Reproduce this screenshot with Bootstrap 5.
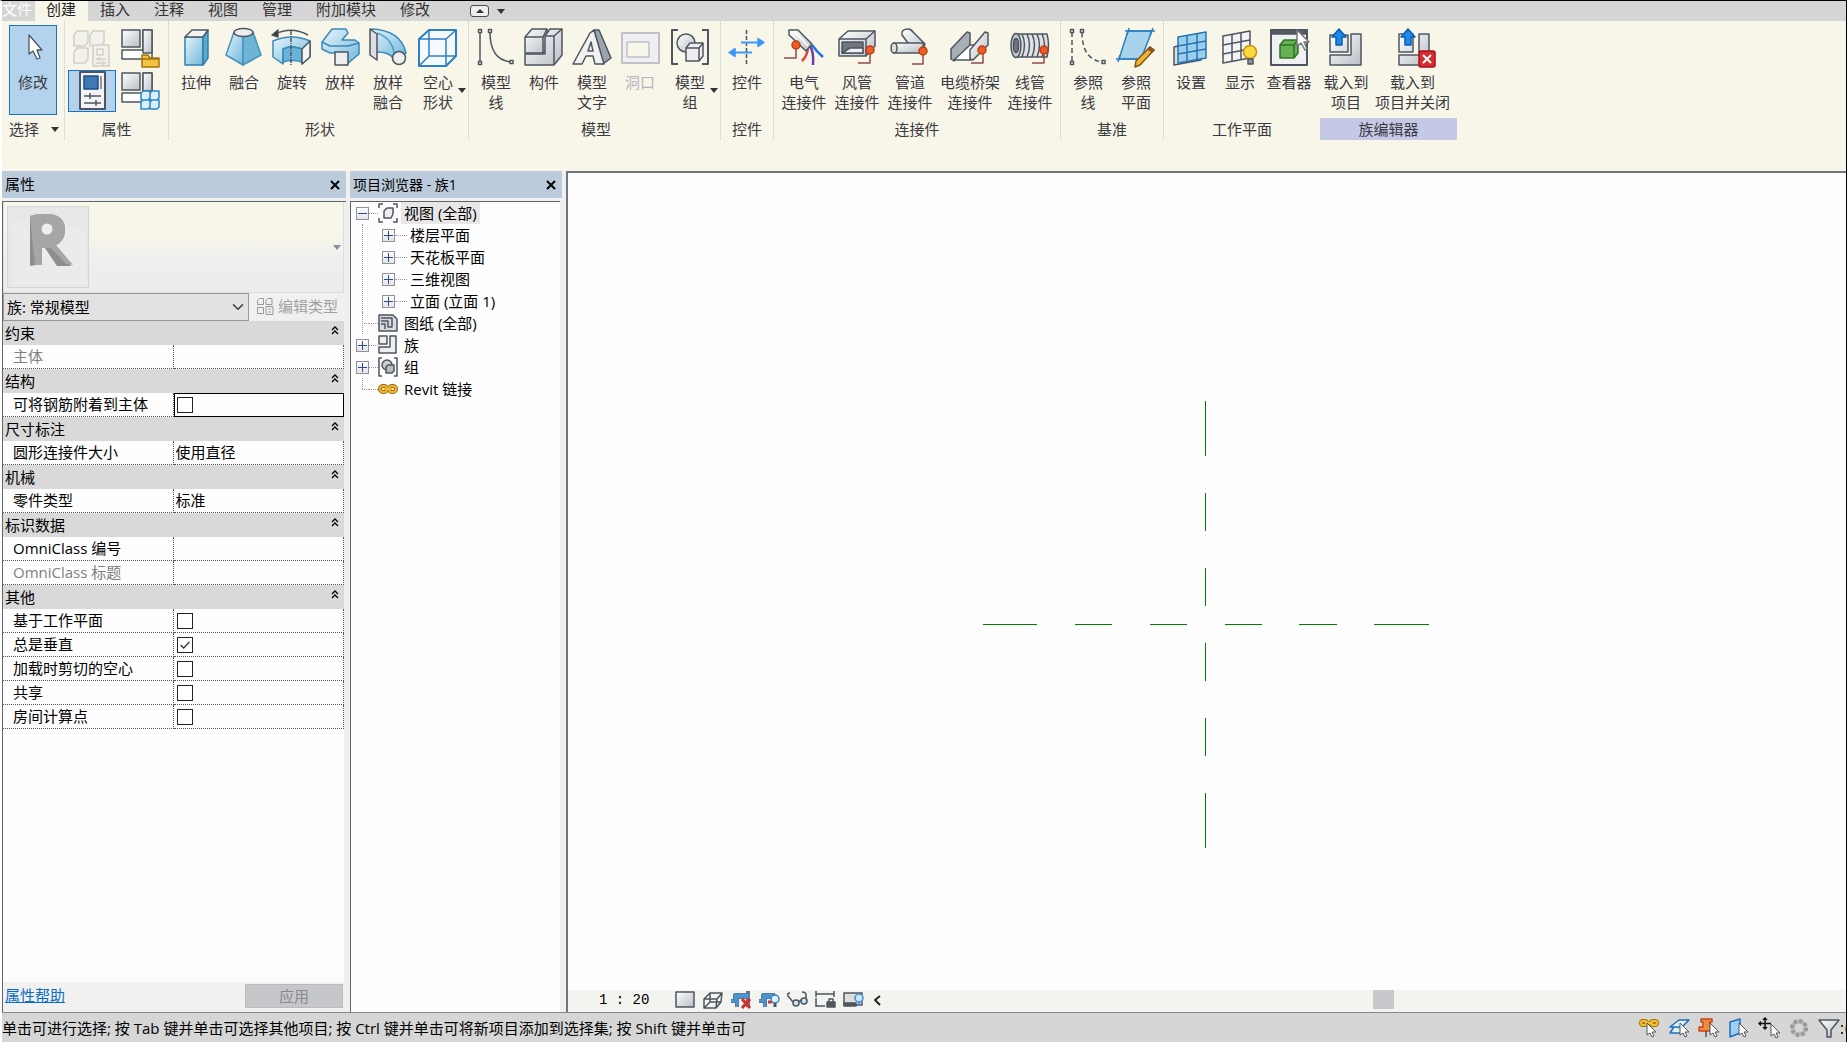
<!DOCTYPE html>
<html lang="zh-CN">
<head>
<meta charset="utf-8">
<meta name="viewport" content="width=device-width, initial-scale=1">
<title>Revit - 族1</title>
<link rel="stylesheet" href="https://cdn.jsdelivr.net/npm/bootstrap@5.3.0/dist/css/bootstrap.min.css">
<style>
body{font-family:"Open Sans","Noto Sans CJK SC",sans-serif;font-size:15px;line-height:20px;color:#000;background:#f0f0f0;border-top:1px solid #000;border-right:1px solid #000;border-left:2px solid #fff}
svg{display:block;flex:none;overflow:visible}
svg.k{fill:none;stroke:#4d5660;stroke-width:1.5;stroke-linejoin:round}
.tabstrip{height:20px;background:#d5d5d6}
.tabstrip .nav-link{padding:0 12px;line-height:16px;height:20px;color:#333;border-radius:0}
.tabstrip .nav-link.filetab{padding:0 3px 0 0;color:#fff}
.tabstrip .nav-link.active{background:#f8f6e8;color:#222;padding-left:11px}
.minibtn{width:19px;height:12px;border:1px solid #444c55;border-radius:3px;background:#eee;padding:0}
.ribbon{height:150px;background:#f8f6e8;color:#3a3a42}
.panel{height:119px;padding:4px 3px 0;border-right:1px dotted #bcc5d0}
.panel .btns{height:90px;gap:1px}
.panel.first{padding-right:5px}
.tight .btns{gap:0}
.flush{padding-right:0}
.ptitle{height:22px;line-height:22px;margin-top:3px;text-align:center}
.famtitle{background:#c6c9e6}
.propgrid{grid-template-columns:48px 48px;grid-template-rows:44px 42px}
.tool{border:0;background:none;padding:2px 0 0;min-width:48px;color:inherit;display:flex;flex-direction:column;align-items:center;text-align:center;line-height:20px;border-radius:0;font-size:15px}
.tool svg{margin-bottom:5px}
.tool.dim{color:#b5b5c2}
.wide .tool{min-width:52px;padding-left:3px;padding-right:3px}
.tool.split{flex-direction:row;align-items:flex-start;min-width:56px;padding-left:6px}
.tool.split .caret{margin-top:61px}
.tool.mod{height:90px;border:1px solid #1b73c4;background:#b3d2ee;padding-top:1px}
.pressed{border:1px solid #1b73c4;background:#b3d2ee}
.caret{width:0;height:0;border:4px solid transparent;border-top:5px solid #333;border-bottom:0}
.dockhead{height:27px;line-height:27px;background:#bccbdb;padding:0 4px 0 3px}
.xbtn{border:0;background:none;padding:0;width:12px}
.props{width:344px}
.browser{width:212px}
.browser .dockhead{font-size:14px}
.well{margin-top:3px;border-top:1px solid #60666c;border-left:1px solid #60666c}
.typesel{height:91px;background:linear-gradient(#f8f6e8 35%,#efefef 60%,#ececee);border:1px solid #ddd;border-top:0;margin-right:2px;padding:4px 2px 4px 3px}
.typesel .caret{border-top-color:#8a90a0}
.thumb{width:82px;height:82px;border:1px solid #d6d6d8;background:#e8e8e8}
.famsel{width:246px;height:28px;border:1px solid #999;border-radius:0;background-color:#e2e2e2;padding:0 28px 0 3px;font-size:15px;line-height:26px;background-size:12px 12px;background-position:right 4px center;color:#000}
.edtype{border:0;background:none;padding:0 0 2px;color:#a0a0a0!important;font-size:15px;height:28px}
.gridwrap{background:#fdfdfd;margin-right:2px}
.grid{border-collapse:separate;border-spacing:0;width:341px;table-layout:fixed}
.grid tr{height:24px}
.grid th,.grid td{padding:0;height:24px;line-height:23px;font-weight:400}
.grid th.grp{background:#d9d9d9;padding:0 6px 0 2px}
.grid th.grp svg{margin-top:4px}
.grid th.nm{width:173px;padding-left:10px;border-bottom:1px dotted #555;border-right:1px dotted #555}
.grid td{border-bottom:1px dotted #555;border-right:1px dotted #555;padding-left:2px}
.grid td.cur{outline:1px solid #000;outline-offset:-1px}
.grid .off{color:#808080}
.grid .form-check-input{display:block;width:16px;height:16px;margin:0 0 0 1px;border:1px solid #222;border-radius:0;background-color:#fff}
.grid .form-check-input:checked{background-image:url("data:image/svg+xml,%3Csvg xmlns='http://www.w3.org/2000/svg' viewBox='0 0 16 16'%3E%3Cpath fill='none' stroke='%23333' stroke-width='1.5' d='M3 8l3.500 3.500L13 4.500'/%3E%3C/svg%3E")}
.propfoot{height:30px;background:#f1f1ef;padding:0 3px 4px 2px}
.propfoot a{color:#0a6cc8}
.applybtn{width:98px;height:24px;border:1px solid #b9bbbf;border-radius:0;background:#c6c7ca;color:#8a8a8a!important;padding:0;line-height:20px;font-size:15px;align-self:flex-end}
.tree{background:#fdfdfd;padding:0 0 0 5px;margin-right:2px}
.tree ul{list-style:none;margin:0;padding:0}
.node{height:22px;line-height:22px;display:flex;align-items:center}
.box{width:13px;height:13px;border:1px solid #8c9299;background:linear-gradient(#fff,#e4e4ea);padding:0;position:relative;flex:none}
.box::before,.box.plus::after{content:"";position:absolute;left:1px;top:5px;width:9px;height:1px;background:#2b4a92}
.box.plus::after{left:5px;top:1px;width:1px;height:9px}
.dots{width:9px;border-top:1px dotted #999;flex:none}
.dots.long{width:12px}
.noexp{width:13px;height:22px;flex:none;position:relative}
.noexp::before{content:"";position:absolute;left:6px;top:0;height:22px;border-left:1px dotted #999}
.noexp::after{content:"";position:absolute;left:6px;width:7px;top:11px;border-top:1px dotted #999}
.noexp.endn::before{height:11px}
.tree .sub{margin-left:6px;border-left:1px dotted #999;padding-left:19px}
.lbl{padding:0 3px;margin-left:3px}
.sub .lbl{margin-left:0}
.lbl.sel{background:#e8e6e6}
.work{min-height:0}
.view{border-left:2px solid #70767c;border-top:2px solid #70767c;background:#fdfdfd;min-width:0}
.drawing{min-height:0;flex:1 1 0}
.viewbar{height:22px;background:#f3f3f0;gap:8px;padding:0 0 2px 31px}
.viewbar .scale{font-family:"Liberation Mono","Noto Sans CJK SC",monospace;font-size:14px;width:68px}
.viewbar button,.statusbar button{border:0;background:none;padding:0}
.hthumb{width:21px;height:19px;background:#c8c9cc;margin-left:482px;align-self:flex-start}
.statusbar{height:30px;background:#d6d6d6;border-top:1px solid #85878b;padding-right:7px}
.statusbar .picks{gap:10px}
</style>
<script src="https://cdn.jsdelivr.net/npm/bootstrap@5.3.0/dist/js/bootstrap.bundle.min.js"></script>
</head>
<body class="d-flex flex-column vh-100">
<svg width="0" height="0" class="position-absolute" aria-hidden="true"><defs>
<linearGradient id="b" x1="0" y1="0" x2="1" y2="1"><stop offset="0" stop-color="#e6f5fb"/><stop offset="1" stop-color="#6fb7dc"/></linearGradient>
<linearGradient id="g" x1="0" y1="0" x2="1" y2="1"><stop offset="0" stop-color="#fff"/><stop offset="1" stop-color="#b9bec5"/></linearGradient>
</defs></svg>

<nav class="tabstrip nav flex-nowrap align-items-start">
<a class="nav-link filetab" href="#">文件</a><a class="nav-link active" href="#">创建</a><a class="nav-link" href="#">插入</a><a class="nav-link" href="#">注释</a><a class="nav-link" href="#">视图</a><a class="nav-link" href="#">管理</a><a class="nav-link" href="#">附加模块</a><a class="nav-link" href="#">修改</a>
<div class="d-flex align-items-center gap-2 ms-4 ps-1 pt-1"><button class="minibtn d-flex align-items-center justify-content-center" aria-label="最小化功能区"><svg width="8" height="4"><path d="M0 4L4 0L8 4z" fill="#333"/></svg></button><span class="caret"></span></div>
</nav>

<header class="ribbon d-flex">
<section class="panel first"><div class="btns ps-1"><button class="tool mod"><svg class="k" width="40" height="40"><path d="M16 8V27L20 24L24 32L27 31L24 23H29z" fill="#fff" stroke-width="1.300"/></svg>修改</button></div>
<div class="ptitle d-flex align-items-center ps-1 gap-2">选择<span class="caret ms-1"></span></div></section>

<section class="panel"><div class="btns propgrid d-grid">
<button class="border-0 bg-transparent p-1 opacity-50" disabled aria-label="族类型"><svg width="40" height="40" class="k"><g stroke="#aaa" fill="#eee"><path d="M2 6l3-4h11v11l-3 4H2zM18 6l3-4h11v11l-3 4H18zM2 23l3-4h11v11l-3 4H2z"/><rect x="21" y="16" width="16" height="21"/><path d="M25 20h6v6h-6zM24 30h10M24 34h10M27 28v4M31 32v4"/></g></svg></button>
<button class="border-0 bg-transparent p-1" aria-label="族类别"><svg width="40" height="40" class="k"><rect x="1" y="1" width="18" height="17" fill="url(#g)"/><path d="M22 1h9v29H1V21h21z" fill="#fff"/><path d="M22 1h9v23h-9z" fill="url(#g)"/><path d="M21 26h6l2 3h9v9H21z" fill="#f3c443" stroke="#a3730d"/><path d="M21 30h17" stroke="#a3730d"/></svg></button>
<button class="pressed p-0 d-flex justify-content-center" aria-label="属性"><svg width="40" height="40" class="k"><rect x="8" y="1" width="25" height="37" fill="#f4f4f6" stroke-width="2"/><path d="M12 5h14v13H12z" fill="#3f78b5" stroke="#1d4d86"/><path d="M29 5v13" stroke="#777"/><path d="M12 25h17M12 32h17M18 22v6M24 29v6"/></svg></button>
<button class="border-0 bg-transparent px-1 py-0" aria-label="类型属性"><svg width="40" height="40" class="k"><rect x="1" y="2" width="18" height="17" fill="url(#g)"/><path d="M22 2h9v29H1V22h21z" fill="#fff"/><path d="M22 2h9v18h-9z" fill="url(#g)"/><g fill="#d9effa" stroke="#2b86c5"><path d="M20 22l2-2h7v7l-2 2h-7zM29 22l2-2h7v7l-2 2h-7zM20 31l2-2h7v7l-2 2h-7zM29 31l2-2h7v7l-2 2h-7z"/></g></svg></button></div>
<div class="ptitle">属性</div></section>

<section class="panel tight flush"><div class="btns d-flex">
<button class="tool"><svg width="40" height="40" class="k"><path d="M9 10h18v28H9z" fill="url(#b)" stroke="#2f7fae"/><path d="M27 10l5-7v28l-5 7z" fill="#5ba9cf" stroke="#2f7fae"/><path d="M9 10l7-7h16l-5 7z" fill="#f4f4f4"/></svg>拉伸</button>
<button class="tool"><svg width="40" height="40" class="k"><path d="M10 5L2 28l17 10V9z" fill="url(#b)" stroke="#4593bd"/><path d="M29 5l8 23-18 10V9z" fill="#6db4d6" stroke="#4593bd"/><ellipse cx="19.500" cy="5.500" rx="9.500" ry="4" fill="#eee"/></svg>融合</button>
<button class="tool"><svg width="40" height="40" class="k"><path d="M1 14Q20 6 38 14V30l-8 7V22l-8-2h-5l-6 2v15l-10-7z" fill="url(#b)" stroke="#3a89b8"/><path d="M11 22l6-2h5l8 2v13q-10-3-19 0z" fill="#68b3d8" stroke="#3a89b8"/><path d="M38 14l-8 8v15l8-7z" fill="#f5f5f5"/><path d="M36 8Q20-1 3 7"/><path d="M0 8l6-5v7z" fill="#333"/><path d="M19 4v35" stroke-dasharray="4 1 1 1"/></svg>旋转</button>
<button class="tool"><svg width="40" height="40" class="k"><path d="M2 15L12 2h14l2 4-6 7h13l4 3v11l-13 11V26H10l-8-4z" fill="url(#b)" stroke="#3a89b8"/><path d="M2 15l8 4h18l11-3" stroke="#3a89b8"/><rect x="15" y="25" width="13" height="13" fill="#eee"/></svg>放样</button>
<button class="tool"><svg width="40" height="40" class="k"><path d="M3 2Q33 3 38 26L25 31Q21 25 9 25z" fill="url(#b)" stroke="#3a89b8"/><path d="M9 6Q26 12 26 29" stroke="#4d9fc8"/><path d="M2 2l7 5v26l-7-5z" fill="#dedfe2"/><circle cx="31" cy="31" r="6.500" fill="#eee"/></svg>放样<br>融合</button>
<button class="tool split"><span class="d-flex flex-column align-items-center"><svg width="40" height="40" class="k"><path d="M1 12L11 3H38V29L28 39H1z" fill="#f4fafd" stroke="#2b7fc4" stroke-width="2"/><path d="M1 12H28V39M28 12l10-9M11 3v26h27M1 39l10-10" stroke="#2b7fc4"/></svg>空心<br>形状</span><span class="caret"></span></button></div>
<div class="ptitle">形状</div></section>

<section class="panel tight flush"><div class="btns d-flex">
<button class="tool"><svg width="40" height="40" class="k"><path d="M4 5V35M14 5Q14 33 35 35"/><g fill="#fff"><path d="M2.500 2.500h3v3h-3zM2.500 34.500h3v3h-3zM12.500 2.500h3v3h-3zM34 33.500h3v3h-3z"/></g></svg>模型<br>线</button>
<button class="tool"><svg width="40" height="40" class="k"><path d="M1 10l7-8h15v20l-4 4H1z" fill="url(#g)"/><path d="M1 27h20V9l5-7h12v26l-8 10H1z" fill="url(#g)"/><path d="M21 9h9v29M30 9l8-7M1 10h18l4-8M19 10v16"/></svg>构件</button>
<button class="tool"><svg width="40" height="40" class="k"><path d="M22 3h5l12 28-8 6z" fill="#9da4ad"/><path d="M1 37L18 6l4-3 10 34h-9l-2-8H14l-4 8zM16 24h5l-2-9z" fill="#f1f1f2" fill-rule="evenodd"/></svg>模型<br>文字</button>
<button class="tool dim" disabled><svg width="40" height="40" class="k"><g stroke="#bfc0ca"><rect x="2" y="6" width="37" height="30" fill="#efeff2" stroke-width="2"/><rect x="7" y="15" width="22" height="15" fill="#f8f6e8"/></g></svg>洞口</button>
<button class="tool split"><span class="d-flex flex-column align-items-center"><svg width="40" height="40" class="k"><path d="M8 3H2v34h6M32 3h6v34h-6" stroke-width="2"/><circle cx="16" cy="16" r="9" fill="url(#g)"/><path d="M16 21l4-5h13v13l-4 5H16z" fill="#eee"/><path d="M16 21h13v13M29 21l4-5"/></svg>模型<br>组</span><span class="caret"></span></button></div>
<div class="ptitle">模型</div></section>

<section class="panel wide px-0"><div class="btns d-flex"><button class="tool"><svg width="40" height="40" class="k"><path d="M19.500 3V39" stroke-dasharray="4 2"/><g stroke="#3d98f5" fill="#3d98f5"><path d="M14 15.500H32M7 25.500H25" stroke-width="2"/><path d="M31 11.500v8l6-4zM8 21.500v8l-6-4z"/></g></svg>控件</button></div><div class="ptitle">控件</div></section>

<section class="panel wide px-1"><div class="btns d-flex">
<button class="tool"><svg width="40" height="40" class="k"><path d="M24 19q0 9-6 15" stroke="#e2473c" stroke-width="2.500"/><path d="M26 19q4 6 3 19" stroke="#6d3fae" stroke-width="2.500"/><path d="M28 18q5 7 11 12" stroke="#1d73d0" stroke-width="2.500"/><path d="M5 3h9l14 14-6 7L5 8z" fill="url(#g)"/><path d="M10 4l14 15" stroke="#fff"/><path d="M12 17V31H0" stroke="#94484c"/><circle cx="12" cy="18" r="4" fill="#ee5b25" stroke="#bb3f15"/></svg>电气<br>连接件</button>
<button class="tool"><svg width="40" height="40" class="k"><path d="M2 12L11 4H38V19l-9 10H2z" fill="url(#g)"/><path d="M2 12H29V29M29 12l9-8"/><path d="M5 15h21v11H5z" fill="#70767f"/><path d="M5 26l8-5h13v5z" fill="#eee"/><path d="M33 24V36H21" stroke="#94484c"/><circle cx="33" cy="23" r="4" fill="#ee5b25" stroke="#bb3f15"/></svg>风管<br>连接件</button>
<button class="tool"><svg width="40" height="40" class="k"><path d="M12 8q-1-6 6-6 3 0 5 3l12 12-3 8-8-1z" fill="url(#g)"/><path d="M4 16H33v10H4q-4-5 0-10z" fill="url(#g)"/><ellipse cx="4" cy="21" rx="3" ry="5" fill="#ddd"/><path d="M33 24V37H22" stroke="#94484c"/><circle cx="33" cy="24" r="4" fill="#ee5b25" stroke="#bb3f15"/></svg>管道<br>连接件</button>
<button class="tool"><svg width="40" height="40" class="k"><path d="M1 22L17 5l3 1v13L4 34l-3-2z" fill="#a9afb7"/><path d="M4 33l16-15h8l-7 15z" fill="#fff"/><path d="M20 23L35 5l3 1v12L23 33l-3-1z" fill="url(#g)"/><path d="M33 24V36H21" stroke="#94484c"/><circle cx="32" cy="23" r="4" fill="#ee5b25" stroke="#bb3f15"/></svg>电缆桥架<br>连接件</button>
<button class="tool"><svg width="40" height="40" class="k"><path d="M5 7H37q3 11 0 23H5z" fill="#dfe1e4"/><ellipse cx="6" cy="18.500" rx="5" ry="12" fill="#c4c8cd"/><ellipse cx="6" cy="18.500" rx="2.500" ry="7" fill="#70767f"/><path d="M12 7q5 11 0 23M17 7q5 11 0 23M22 7q5 11 0 23M27 7q5 11 0 23M32 7q5 11 0 23"/><path d="M34 24V36H22" stroke="#94484c"/><circle cx="34" cy="23" r="4" fill="#ee5b25" stroke="#bb3f15"/></svg>线管<br>连接件</button></div>
<div class="ptitle">连接件</div></section>

<section class="panel tight"><div class="btns d-flex">
<button class="tool"><svg width="40" height="40" class="k"><path d="M4 5V35M14 5Q14 33 35 35" stroke-dasharray="5 3"/><g fill="#fff"><path d="M2.500 2.500h3v3h-3zM2.500 34.500h3v3h-3zM12.500 2.500h3v3h-3zM34 33.500h3v3h-3z"/></g></svg>参照<br>线</button>
<button class="tool"><svg width="40" height="40" class="k"><path d="M12 4H36L25 32H3z" fill="#a9d3ec" stroke="#2b7fc4"/><path d="M9 4h30M0 32h26M13 1l-2 7M37 1l-3 7M4 28l-2 7" stroke="#2b7fc4"/><path d="M34 20l4 3-14 15-5 2 1-6z" fill="#f1b52e" stroke="#80571a"/><path d="M34 20l4 3-2 2-4-3z" fill="#a34f3d" stroke="#80571a"/></svg>参照<br>平面</button></div>
<div class="ptitle">基准</div></section>

<section class="panel border-0"><div class="btns d-flex pe-1">
<button class="tool"><svg width="40" height="40" class="k"><path d="M3 20l12-3 15 2v14L3 38z" fill="#ddd"/><path d="M7 10l28-5v26L7 36z" fill="#9cceec" stroke="#2474b5"/><path d="M7 19l28-5M7 27l28-5M16 8v26M26 7v25" stroke="#2474b5"/></svg>设置</button>
<button class="tool"><svg width="40" height="40" class="k"><path d="M3 9l27-5v27L3 36z" fill="#f3f3f3"/><path d="M3 18l27-5M3 27l27-5M12 7v27M21 6v27"/><circle cx="30" cy="25" r="6.500" fill="#ffd83d" stroke="#c69413"/><path d="M28 32h5v5h-5z" fill="#999"/></svg>显示</button>
<button class="tool"><svg width="40" height="40" class="k"><rect x="2" y="3" width="36" height="35" fill="#f1f1f3" stroke-width="2"/><path d="M2 3h36v4H2z" fill="#555b66"/><path d="M11 18l4-5h14v13l-4 5H11z" fill="#65b154" stroke="#2e7425"/><path d="M11 18h14v13M25 18l4-5" stroke="#2e7425"/><path d="M28 3v16l4-3 4 7 2-1-3-7h5z" fill="#fff" stroke="#777"/></svg>查看器</button></div>
<div class="ptitle">工作平面</div></section>

<section class="panel wide tight px-0 border-0"><div class="btns d-flex pe-1">
<button class="tool"><svg width="40" height="40" class="k"><path d="M4 8H22V25H4zM25 7H35V38H4V28H25z" fill="url(#g)"/><path d="M13 2l7 8h-4v8h-6v-8H6z" fill="#2188ec" stroke="#0d5dae"/></svg>载入到<br>项目</button>
<button class="tool"><svg width="40" height="40" class="k"><path d="M6 7H20V25H6zM26 7H36V25H26zM6 28H28V38H6z" fill="url(#g)"/><path d="M15 2l7 8h-4v8h-6v-8H8z" fill="#2188ec" stroke="#0d5dae"/><rect x="26" y="24" width="16" height="16" rx="2" fill="#d92b2f" stroke="#a31418"/><path d="M30 28l8 8M38 28l-8 8" stroke="#fff" stroke-width="2"/></svg>载入到<br>项目并关闭</button></div>
<div class="ptitle famtitle">族编辑器</div></section>
</header>

<main class="work d-flex flex-fill">
<aside class="props d-flex flex-column me-1 flex-shrink-0">
<div class="dockhead d-flex justify-content-between align-items-center">属性<button class="xbtn" aria-label="关闭"><svg width="10" height="10"><path d="M1 1l8 8M9 1L1 9" stroke="#000" stroke-width="2"/></svg></button></div>
<div class="well flex-fill d-flex flex-column">
<div class="typesel d-flex justify-content-between align-items-center"><div class="thumb"><svg width="80" height="80"><path d="M5 18Q30 0 78 25V78H5z" fill="#ebebeb"/><path d="M22 9l8-2h12q15 2 15 16 0 11-9 15l15 21H49L37 41h-3v16l-12 2z" fill="#8d8e90"/><path d="M22 9l8-2h12q15 2 15 16 0 11-9 15l17 20-7-1-15-16h-9v17h-7z" fill="#a5a6a8"/><circle cx="39" cy="22" r="5.500" fill="#eee"/></svg></div><span class="caret"></span></div>
<div class="d-flex align-items-center gap-2"><select class="form-select famsel" aria-label="族"><option>族: 常规模型</option></select>
<button class="edtype d-flex align-items-center gap-1" disabled><svg width="17" height="17" fill="none" stroke="#999"><path d="M.500 2.500l2-2h4v6h-6zM9 2.500l2-2h4v6H9zM.500 9.500h6v6h-6zM9 8.500h7v8H9zM11 11h3M11 14h3"/></svg>编辑类型</button></div>
<div class="gridwrap flex-fill">
<table class="grid"><tbody>
<tr><th class="grp" colspan="2"><div class="d-flex justify-content-between">约束<svg width="6" height="9" fill="none" stroke="#000" stroke-width="1.300"><path d="M0 4l3-3 3 3M0 8l3-3 3 3"/></svg></div></th></tr>
<tr><th class="nm off">主体</th><td></td></tr>
<tr><th class="grp" colspan="2"><div class="d-flex justify-content-between">结构<svg width="6" height="9" fill="none" stroke="#000" stroke-width="1.300"><path d="M0 4l3-3 3 3M0 8l3-3 3 3"/></svg></div></th></tr>
<tr><th class="nm"><label for="c1">可将钢筋附着到主体</label></th><td class="cur"><input class="form-check-input" type="checkbox" id="c1"></td></tr>
<tr><th class="grp" colspan="2"><div class="d-flex justify-content-between">尺寸标注<svg width="6" height="9" fill="none" stroke="#000" stroke-width="1.300"><path d="M0 4l3-3 3 3M0 8l3-3 3 3"/></svg></div></th></tr>
<tr><th class="nm">圆形连接件大小</th><td>使用直径</td></tr>
<tr><th class="grp" colspan="2"><div class="d-flex justify-content-between">机械<svg width="6" height="9" fill="none" stroke="#000" stroke-width="1.300"><path d="M0 4l3-3 3 3M0 8l3-3 3 3"/></svg></div></th></tr>
<tr><th class="nm">零件类型</th><td>标准</td></tr>
<tr><th class="grp" colspan="2"><div class="d-flex justify-content-between">标识数据<svg width="6" height="9" fill="none" stroke="#000" stroke-width="1.300"><path d="M0 4l3-3 3 3M0 8l3-3 3 3"/></svg></div></th></tr>
<tr><th class="nm">OmniClass 编号</th><td></td></tr>
<tr><th class="nm off">OmniClass 标题</th><td></td></tr>
<tr><th class="grp" colspan="2"><div class="d-flex justify-content-between">其他<svg width="6" height="9" fill="none" stroke="#000" stroke-width="1.300"><path d="M0 4l3-3 3 3M0 8l3-3 3 3"/></svg></div></th></tr>
<tr><th class="nm"><label for="c2">基于工作平面</label></th><td><input class="form-check-input" type="checkbox" id="c2"></td></tr>
<tr><th class="nm"><label for="c3">总是垂直</label></th><td><input class="form-check-input" type="checkbox" id="c3" checked></td></tr>
<tr><th class="nm"><label for="c4">加载时剪切的空心</label></th><td><input class="form-check-input" type="checkbox" id="c4"></td></tr>
<tr><th class="nm"><label for="c5">共享</label></th><td><input class="form-check-input" type="checkbox" id="c5"></td></tr>
<tr><th class="nm"><label for="c6">房间计算点</label></th><td><input class="form-check-input" type="checkbox" id="c6"></td></tr>
</tbody></table></div>
<div class="propfoot d-flex justify-content-between align-items-center"><a href="#">属性帮助</a><button class="applybtn" disabled>应用</button></div>
</div></aside>

<aside class="browser d-flex flex-column flex-shrink-0 me-1">
<div class="dockhead d-flex justify-content-between align-items-center"><span>项目浏览器 - 族1</span><button class="xbtn" aria-label="关闭"><svg width="10" height="10"><path d="M1 1l8 8M9 1L1 9" stroke="#000" stroke-width="2"/></svg></button></div>
<div class="well tree flex-fill"><ul>
<li><div class="node"><button class="box" aria-label="折叠"></button><span class="dots"></span><svg width="20" height="20" class="k"><path d="M5 1H1v4M15 1h4v4M5 19H1v-4M15 19h4v-4"/><path d="M6 8l3-3h6v6l-2 4H6z" fill="#eee"/></svg><span class="lbl sel">视图 (全部)</span></div>
<ul class="sub">
<li class="node"><button class="box plus" aria-label="展开"></button><span class="dots long"></span><span class="lbl">楼层平面</span></li>
<li class="node"><button class="box plus" aria-label="展开"></button><span class="dots long"></span><span class="lbl">天花板平面</span></li>
<li class="node"><button class="box plus" aria-label="展开"></button><span class="dots long"></span><span class="lbl">三维视图</span></li>
<li class="node"><button class="box plus" aria-label="展开"></button><span class="dots long"></span><span class="lbl">立面 (立面 1)</span></li></ul></li>
<li class="node"><span class="noexp"></span><span class="dots"></span><svg width="20" height="20" class="k"><path d="M1 2h14l4 4v12H1z" fill="#d8dadd"/><path d="M3 5h11v9h-4V8H3M3 11h4v5"/></svg><span class="lbl">图纸 (全部)</span></li>
<li class="node"><button class="box plus" aria-label="展开"></button><span class="dots"></span><svg width="20" height="20" class="k"><path d="M1 1h8v8H1zM12 1h6v17H1v-6h11z" fill="#eee"/></svg><span class="lbl">族</span></li>
<li class="node"><button class="box plus" aria-label="展开"></button><span class="dots"></span><svg width="20" height="20" class="k"><path d="M4 1H1v18h3M16 1h3v18h-3"/><circle cx="9" cy="8" r="5" fill="#ccc"/><path d="M8 10l2-2h6v6l-2 2H8z" fill="#bbb"/></svg><span class="lbl">组</span></li>
<li class="node"><span class="noexp endn"></span><span class="dots"></span><svg width="20" height="20" fill="none"><g stroke="#9b6a0b" stroke-width="4"><rect x="2" y="7" width="7" height="6" rx="3"/><rect x="11" y="7" width="7" height="6" rx="3"/></g><g stroke="#f0b62f" stroke-width="2"><rect x="2" y="7" width="7" height="6" rx="3"/><rect x="11" y="7" width="7" height="6" rx="3"/><path d="M6 10h8"/></g></svg><span class="lbl">Revit 链接</span></li>
</ul></div></aside>

<section class="view flex-fill d-flex flex-column">
<div class="drawing"><svg width="100%" height="100%" viewBox="568 173 1278 817" preserveAspectRatio="xMidYMid meet" shape-rendering="crispEdges"><path d="M1205.500 401V456M1205.500 493V531M1205.500 568V606M1205.500 643V681M1205.500 718V756M1205.500 793V848M983 624.500H1037M1075 624.500H1112M1150 624.500H1187M1225 624.500H1262M1299 624.500H1337M1374 624.500H1429" stroke="#008000"/></svg></div>
<div class="viewbar d-flex align-items-center"><span class="scale">1 : 20</span>
<button aria-label="详细程度"><svg width="20" height="20" class="k"><rect x="1" y="2" width="18" height="15" fill="url(#g)"/></svg></button>
<button aria-label="视觉样式"><svg width="20" height="20" class="k"><path d="M1 9l6-6h12l-1 9-5 6H1zM1 9h13l5-6M14 9l-1 9M7 3v9h11M1 18l6-6"/></svg></button>
<button aria-label="裁剪视图"><svg width="20" height="20" class="k"><path d="M0 11h4V5h13V1M6 17V7h11v10" stroke="#5c7893" stroke-width="4"/><path d="M0 11h4V5h13M6 17V7h11" stroke="#4a96d0" stroke-width="2"/><path d="M11 9l8 9M19 9l-8 9" stroke="#d12f2f" stroke-width="3"/></svg></button>
<button aria-label="显示裁剪区域"><svg width="20" height="20" class="k"><path d="M0 11h4V5h12M6 17V7h7" stroke="#5c7893" stroke-width="4"/><path d="M0 11h4V5h12M6 17V7h7" stroke="#4a96d0" stroke-width="2"/><path d="M9 12h4" stroke="#d12f2f" stroke-width="3"/><circle cx="16" cy="9" r="4" fill="#dff0fc" stroke="#3a7fb8"/><path d="M16 13v4" stroke-width="3"/></svg></button>
<button aria-label="临时隐藏"><svg width="20" height="20" class="k"><path d="M6 12L1 6q-1-3 2-3M12 12q1-2 3-2M15 2q4 0 4 3v5"/><circle cx="9" cy="13" r="3" fill="#c8e8f5"/><circle cx="17" cy="11" r="3" fill="#c8e8f5"/></svg></button>
<button aria-label="显示约束"><svg width="20" height="20" class="k"><path d="M1 1v6M19 1v6M1 4h18M1 8v9M1 16h9"/><path d="M12 12h8v5h-8z" fill="#555"/><path d="M14 12V9h4v3"/></svg></button>
<button aria-label="预览可见性"><svg width="20" height="20" class="k"><path d="M1 3h18v12H1z" fill="#ddd"/><path d="M1 13h12v3H1z" fill="#555"/><circle cx="16" cy="8" r="4" fill="#c8e4fa" stroke="#4c8dcf"/><path d="M16 12v4" stroke="#4c8dcf" stroke-width="2"/></svg></button>
<button aria-label="收起"><svg width="12" height="12" class="k"><path d="M9 2L4 6l5 5" stroke="#222" stroke-width="2"/></svg></button>
<div class="hthumb"></div></div>
</section>
</main>

<footer class="statusbar d-flex align-items-center justify-content-between"><span class="mt-1 pb-1">单击可进行选择; 按 Tab 键并单击可选择其他项目; 按 Ctrl 键并单击可将新项目添加到选择集; 按 Shift 键并单击可</span>
<div class="picks d-flex">
<button aria-label="选择链接"><svg width="20" height="20" class="k"><g stroke="#a8780c" stroke-width="4"><rect x="2" y="3" width="6" height="4" rx="2"/><rect x="12" y="3" width="6" height="4" rx="2"/></g><g stroke="#f3c130" stroke-width="2"><rect x="2" y="3" width="6" height="4" rx="2"/><rect x="12" y="3" width="6" height="4" rx="2"/><path d="M6 5h8"/></g><path d="M8 5v12l3-2 2 4 2-1-2-4h4z" fill="#fff" stroke-width="1"/></svg></button>
<button aria-label="选择基线图元"><svg width="20" height="20" class="k"><path d="M1 9l9-7h10l-7 7zM5 9l-4 6h13" fill="#dff0fb" stroke="#1d6fbd"/><path d="M11 5v12l3-2 2 4 2-1-2-4h4z" fill="#fff" stroke-width="1"/></svg></button>
<button aria-label="选择锁定图元"><svg width="20" height="20" class="k"><path d="M2 1h11v3h-2v5h3v4H0V9h4V4H2z" fill="#f08a3c" stroke="#c8461a"/><path d="M7 13v6"/><path d="M11 5v12l3-2 2 4 2-1-2-4h4z" fill="#fff" stroke-width="1"/></svg></button>
<button aria-label="按面选择"><svg width="20" height="20" class="k"><path d="M1 4l10-3v14L1 19z" fill="#9fd0f2" stroke="#1d6fbd"/><path d="M10 5v12l3-2 2 4 2-1-2-4h4z" fill="#fff" stroke-width="1"/></svg></button>
<button aria-label="选择时拖曳"><svg width="20" height="20" class="k"><path d="M6 0v11M0 5.500h12M4 2l2-2 2 2M4 9l2 2 2-2M2 3.500l-2 2 2 2" stroke="#111"/><path d="M12 6v12l3-2 2 4 2-1-2-4h4z" fill="#fff" stroke-width="1"/></svg></button>
<button aria-label="后台进程"><svg width="20" height="20" fill="none"><circle cx="10" cy="10" r="6.500" stroke="#b8b8b8" stroke-width="4"/><circle cx="10" cy="10" r="7" stroke="#989898" stroke-width="4" stroke-dasharray="3 2.500"/></svg></button>
<button aria-label="过滤器"><svg width="20" height="20" class="k"><path d="M0 2h20l-8 10v7H8v-7z" fill="url(#g)"/><path d="M22 7h2v2h-2zM22 14h2v2h-2z" fill="#333" stroke="none"/><path d="M27 7q-2 4 0 8z" fill="#d9782a" stroke="none"/></svg></button>
</div></footer>
</body>
</html>
